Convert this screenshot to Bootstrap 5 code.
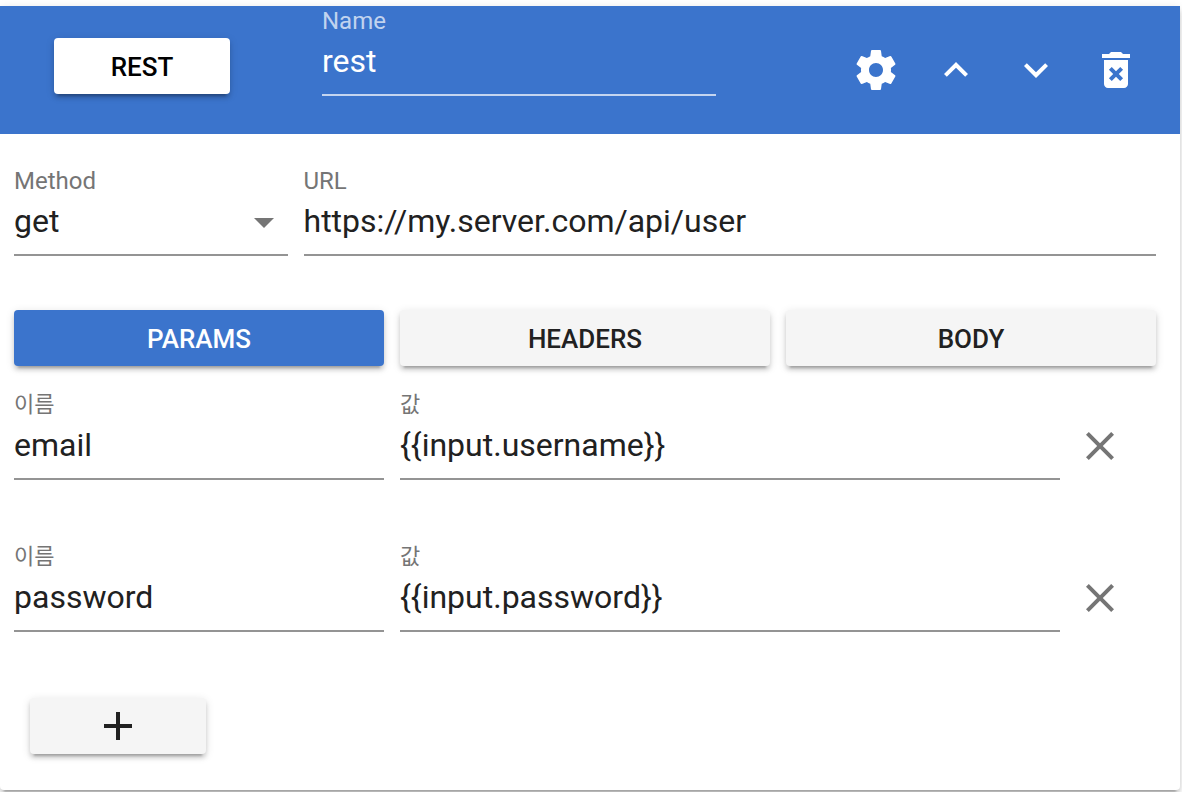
<!DOCTYPE html>
<html lang="ko">
<head>
<meta charset="utf-8">
<meta name="viewport" content="width=device-width, initial-scale=1">
<title>REST</title>
<link href="https://cdn.jsdelivr.net/npm/bootstrap@5.3.0/dist/css/bootstrap.min.css" rel="stylesheet">
<style>
  :root { --brand: #3b74cc; --ink: #212121; --muted: #757575; --line: #949494;
    --lift: 0 6px 2px -4px rgba(0,0,0,.2), 0 4px 4px rgba(0,0,0,.14), 0 2px 10px rgba(0,0,0,.12); }
  body { font-family: Roboto, "Noto Sans CJK KR", sans-serif; color: var(--ink); background: #fff; }
  .panel { margin: 6px 2px 2px 0; border-radius: 4px; box-shadow: var(--lift); background: #fff; }
  .panel-top { background: var(--brand); height: 128px; }
  .panel-main { padding: 32px 24px 36px 14px; }
  .gutter { --bs-gutter-x: 16px; }
  .raised { --bs-btn-padding-y: 0; --bs-btn-font-size: 26px; --bs-btn-font-weight: 500; --bs-btn-border-width: 0;
    --bs-btn-border-radius: 4px; --bs-btn-bg: #f5f5f5; --bs-btn-color: var(--ink); --bs-btn-hover-bg: #eee;
    --bs-btn-active-bg: #e5e5e5; height: 56px; line-height: 58px; box-shadow: var(--lift); }
  .raised.active { --bs-btn-active-bg: var(--brand); --bs-btn-active-color: #fff; box-shadow: var(--lift); }
  .raised-white { --bs-btn-bg: #fff; --bs-btn-color: #000; }
  .short { width: 176px; }
  .type-btn { margin: 32px 92px 0 54px; }
  .tools { margin: 24px 24px 0 120px; }
  .tools .btn { width: 80px; height: 80px; color: #fff; }
  .icon { width: 48px; height: 48px; fill: currentColor; display: block; }
  .field-label { display: block; font-size: 24px; line-height: 30px; color: var(--muted); }
  .pair .field-label { font-size: 22px; }
  .line-input { display: block; width: 100%; height: 60px; padding: 0 0 8px; border: 0; border-bottom: 2px solid var(--line);
    border-radius: 0; background: transparent; color: inherit; font-size: 32px; appearance: none; outline: 0; }
  .line-input:focus { border-color: var(--brand); }
  .on-brand { color: #fff; }
  .on-brand .field-label { color: rgba(255,255,255,.7); }
  .on-brand .line-input { border-color: rgba(255,255,255,.7); }
  .arrow { top: 2px; color: var(--muted); pointer-events: none; }
  .tabs { margin-top: 54px; margin-bottom: 24px; }
  .pair + .pair { margin-top: 62px; }
  .remove { margin-top: 32px; color: var(--muted); }
  .add { margin: 66px 0 0 16px; }
</style>
</head>
<body>
<main class="panel">
  <header class="panel-top d-flex align-items-start">
    <button type="button" class="btn raised raised-white short type-btn flex-shrink-0">REST</button>
    <div class="on-brand flex-grow-1">
      <label class="field-label" for="name">Name</label>
      <input class="line-input" id="name" type="text" value="rest">
    </div>
    <div class="tools d-flex flex-shrink-0">
      <button type="button" class="btn border-0 p-3" aria-label="Settings"><svg class="icon" viewBox="0 0 24 24"><path d="M19.43 12.98c.04-.32.07-.64.07-.98s-.03-.66-.07-.98l2.11-1.65c.19-.15.24-.42.12-.64l-2-3.46c-.12-.22-.39-.3-.61-.22l-2.49 1c-.52-.4-1.08-.73-1.69-.98l-.38-2.65C14.46 2.18 14.25 2 14 2h-4c-.25 0-.46.18-.49.42l-.38 2.65c-.61.25-1.17.59-1.69.98l-2.49-1c-.23-.09-.49 0-.61.22l-2 3.46c-.13.22-.07.49.12.64l2.11 1.65c-.04.32-.07.65-.07.98s.03.66.07.98l-2.11 1.65c-.19.15-.24.42-.12.64l2 3.46c.12.22.39.3.61.22l2.49-1c.52.4 1.08.73 1.69.98l.38 2.65c.03.24.24.42.49.42h4c.25 0 .46-.18.49-.42l.38-2.65c.61-.25 1.17-.59 1.69-.98l2.49 1c.23.09.49 0 .61-.22l2-3.46c.12-.22.07-.49-.12-.64l-2.11-1.65zM12 15.5c-1.93 0-3.5-1.57-3.5-3.5s1.57-3.5 3.5-3.5 3.5 1.57 3.5 3.5-1.57 3.5-3.5 3.5z"/></svg></button>
      <button type="button" class="btn border-0 p-3" aria-label="Move up"><svg class="icon" viewBox="0 0 24 24"><path d="M7.41 15.41L12 10.83l4.59 4.58L18 14l-6-6-6 6z"/></svg></button>
      <button type="button" class="btn border-0 p-3" aria-label="Move down"><svg class="icon" viewBox="0 0 24 24"><path d="M7.41 8.59L12 13.17l4.59-4.58L18 10l-6 6-6-6z"/></svg></button>
      <button type="button" class="btn border-0 p-3" aria-label="Delete"><svg class="icon" viewBox="0 0 24 24"><path d="M6 19c0 1.1.9 2 2 2h8c1.1 0 2-.9 2-2V7H6v12zm2.46-7.12l1.41-1.41L12 12.59l2.12-2.12 1.41 1.41L13.41 14l2.12 2.12-1.41 1.41L12 15.41l-2.12 2.12-1.41-1.41L10.59 14l-2.13-2.12zM15.5 4l-1-1h-5l-1 1H5v2h14V4z"/></svg></button>
    </div>
  </header>
  <section class="panel-main">
    <div class="row gutter">
      <div class="col-3">
        <label class="field-label" for="method">Method</label>
        <div class="position-relative">
          <select class="line-input" id="method"><option>get</option><option>post</option><option>put</option><option>delete</option></select>
          <svg class="icon arrow position-absolute end-0" viewBox="0 0 24 24"><path d="M7 10l5 5 5-5z"/></svg>
        </div>
      </div>
      <div class="col-9">
        <label class="field-label" for="url">URL</label>
        <input class="line-input" id="url" type="text" value="https://my.server.com/api/user">
      </div>
    </div>
    <div class="row gutter tabs">
      <div class="col-4"><button type="button" class="btn raised active w-100">PARAMS</button></div>
      <div class="col-4"><button type="button" class="btn raised w-100">HEADERS</button></div>
      <div class="col-4"><button type="button" class="btn raised w-100">BODY</button></div>
    </div>
    <div class="row gutter pair">
      <div class="col-4">
        <label class="field-label" for="key1">이름</label>
        <input class="line-input" id="key1" type="text" value="email">
      </div>
      <div class="col-7">
        <label class="field-label" for="value1">값</label>
        <input class="line-input" id="value1" type="text" value="{{input.username}}">
      </div>
      <div class="col-1">
        <button type="button" class="btn border-0 p-0 remove" aria-label="Remove"><svg class="icon" viewBox="0 0 24 24"><path d="M19 6.41L17.59 5 12 10.59 6.41 5 5 6.41 10.59 12 5 17.59 6.41 19 12 13.41 17.59 19 19 17.59 13.41 12z"/></svg></button>
      </div>
    </div>
    <div class="row gutter pair">
      <div class="col-4">
        <label class="field-label" for="key2">이름</label>
        <input class="line-input" id="key2" type="text" value="password">
      </div>
      <div class="col-7">
        <label class="field-label" for="value2">값</label>
        <input class="line-input" id="value2" type="text" value="{{input.password}}">
      </div>
      <div class="col-1">
        <button type="button" class="btn border-0 p-0 remove" aria-label="Remove"><svg class="icon" viewBox="0 0 24 24"><path d="M19 6.41L17.59 5 12 10.59 6.41 5 5 6.41 10.59 12 5 17.59 6.41 19 12 13.41 17.59 19 19 17.59 13.41 12z"/></svg></button>
      </div>
    </div>
    <button type="button" class="btn raised short add d-flex align-items-center justify-content-center" aria-label="Add"><svg class="icon" viewBox="0 0 24 24"><path d="M19 13h-6v6h-2v-6H5v-2h6V5h2v6h6z"/></svg></button>
  </section>
</main>
<script src="https://cdn.jsdelivr.net/npm/bootstrap@5.3.0/dist/js/bootstrap.bundle.min.js"></script>
</body>
</html>
